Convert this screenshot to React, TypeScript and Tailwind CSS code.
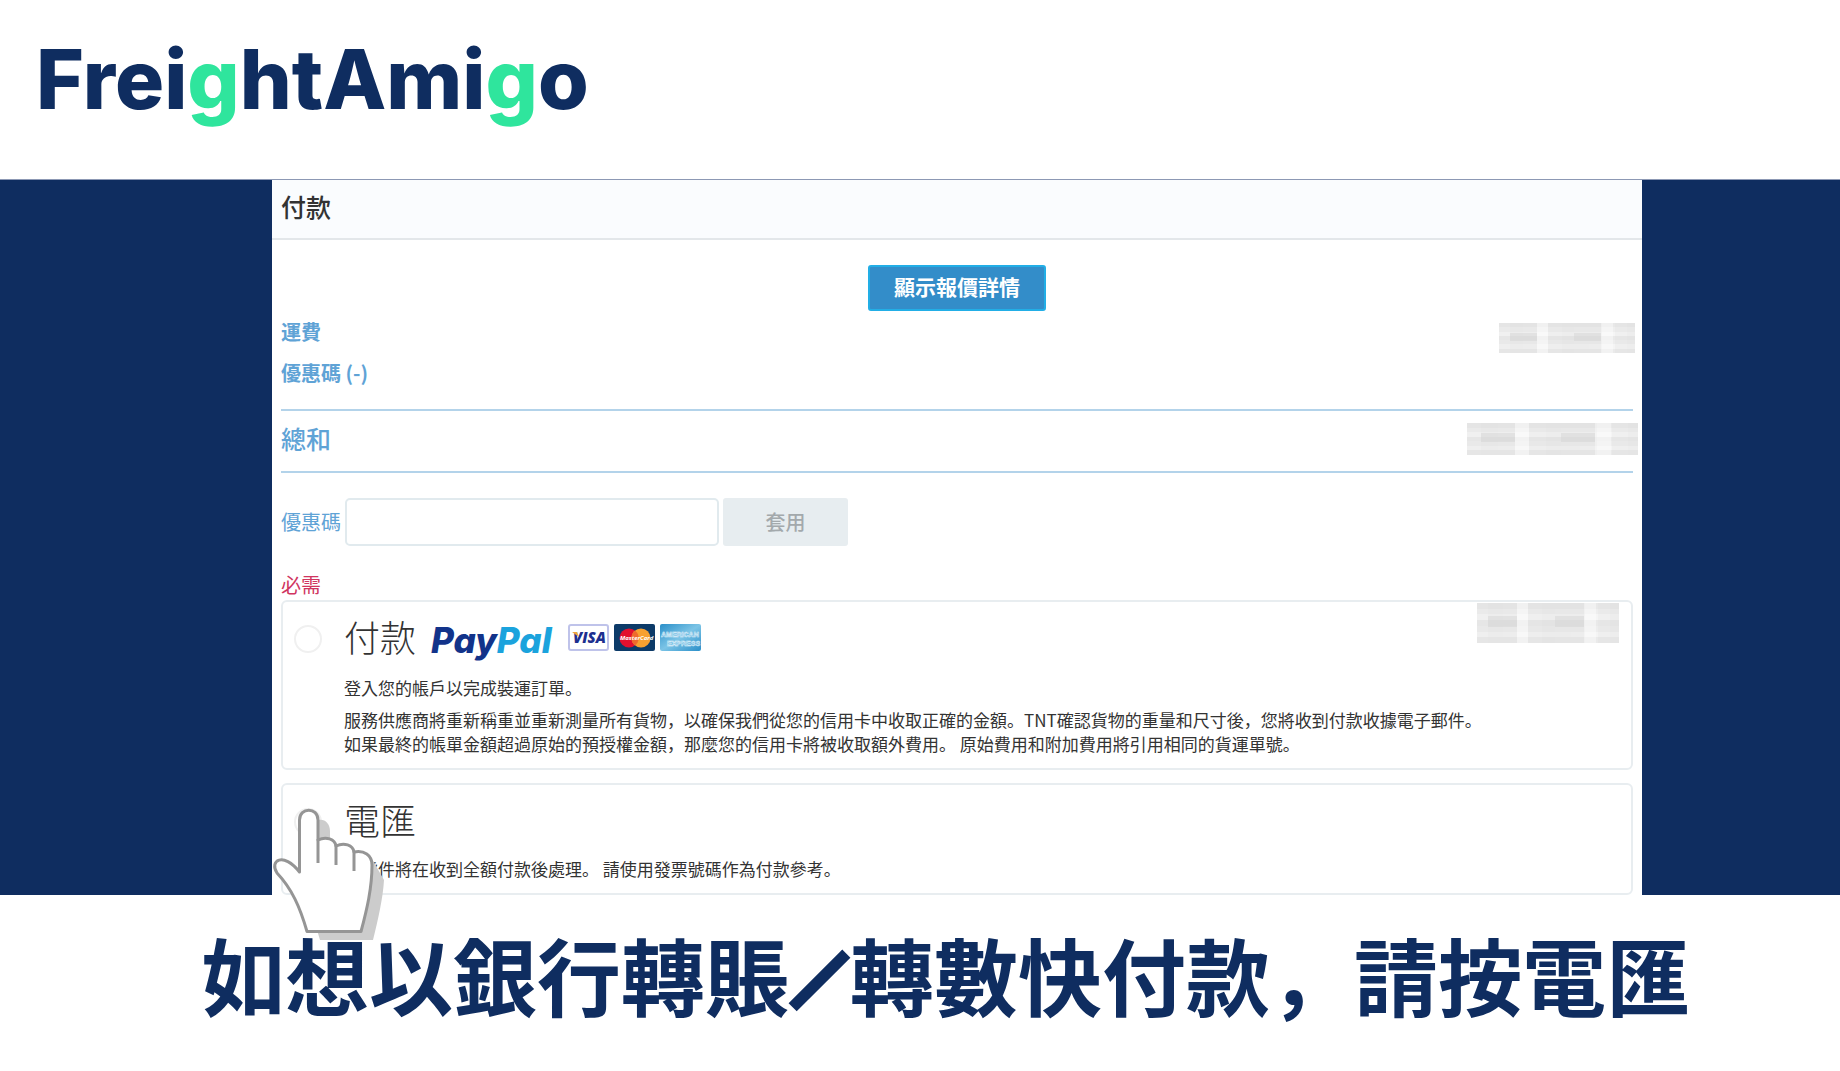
const Logo = () => (
  <a
    href="#"
    className="font-[Inter,sans-serif] text-[82px] leading-[100px] font-extrabold text-[#0f2d60]"
  >
    Frei<span className="text-[#2fe59d]">g</span>htAmi
    <span className="text-[#2fe59d]">g</span>o
  </a>
);

const mosaicCols = [
  { w: 8, o: 0.35 },
  { w: 10, o: 0.6 },
  { w: 10, o: 0.45 },
  { w: 8, o: 0.05 },
  { w: 10, o: 0.4 },
  { w: 9, o: 0.55 },
  { w: 11, o: 0.6 },
  { w: 10, o: 0.5 },
  { w: 9, o: 0.05 },
  { w: 9, o: 0.35 },
  { w: 6, o: 0.5 },
];

const mosaicRows = [0.6, 0.35, 0.05, 0.55, 0.4, 0.1, 0.5];

// Hides a price behind grey blocks
const Mosaic = ({ className }: { className: string }) => {
  let x = 0;
  return (
    <svg
      className={className}
      viewBox="0 0 100 28"
      preserveAspectRatio="none"
      shapeRendering="crispEdges"
      aria-hidden="true"
    >
      <rect width="100" height="28" fill="#f8f8f8" />
      {mosaicRows.map((o, i) => (
        <rect key={i} y={i * 4} width="100" height="4" fill="#d4d4d4" opacity={o * 0.7} />
      ))}
      {mosaicCols.map((c, i) => {
        const left = x;
        x += c.w;
        return (
          <rect key={i} x={left} width={c.w} height="28" fill="#cfcfcf" opacity={c.o * 0.4} />
        );
      })}
      <rect x="8" y="9" width="20" height="8" fill="#cfcfcf" opacity="0.4" />
      <rect x="55" y="9" width="20" height="8" fill="#cfcfcf" opacity="0.4" />
      <rect x="28" width="8" height="28" fill="#ffffff" opacity="0.4" />
      <rect x="75" width="9" height="28" fill="#ffffff" opacity="0.4" />
    </svg>
  );
};

const CardBrands = () => (
  <div className="flex gap-[5px]">
    <svg width="41" height="27" viewBox="0 0 41 27" role="img" aria-label="Visa">
      <rect x="1" y="1" width="39" height="25" rx="2" fill="#fff" stroke="#bfc3ea" strokeWidth="2" />
      <text x="5" y="19" fontFamily="Open Sans" fontSize="15" fontWeight="800" fontStyle="italic" fill="#1d2f8f">
        VISA
      </text>
      <path d="M4 8h5l2 5z" fill="#f0a63c" />
    </svg>
    <svg width="41" height="27" viewBox="0 0 41 27" role="img" aria-label="MasterCard">
      <rect width="41" height="27" rx="2" fill="#0c3a68" />
      <circle cx="15" cy="14" r="9.5" fill="#e2102e" />
      <circle cx="27" cy="14" r="9.5" fill="#f7a030" />
      <path d="M21 6.5a9.5 9.5 0 0 1 0 15a9.5 9.5 0 0 1 0-15z" fill="#ef6a2c" />
      <text x="6" y="16" fontFamily="Open Sans" fontSize="6" fontWeight="700" fontStyle="italic" fill="#fff">
        MasterCard
      </text>
    </svg>
    <svg width="41" height="27" viewBox="0 0 41 27" role="img" aria-label="American Express">
      <defs>
        <linearGradient id="amex" x1="0" y1="0" x2="1" y2="1">
          <stop offset="0" stopColor="#2a8fc9" />
          <stop offset="0.5" stopColor="#7cc4e6" />
          <stop offset="1" stopColor="#2a8fc9" />
        </linearGradient>
      </defs>
      <rect width="41" height="27" rx="2" fill="url(#amex)" />
      <g fontFamily="Liberation Sans" fontSize="7" fontWeight="700" fill="#57addb" stroke="#e4f4fc" strokeWidth="0.5">
        <text x="1" y="13">AMERICAN</text>
        <text x="7" y="22">EXPRESS</text>
      </g>
    </svg>
  </div>
);

const HandPointer = () => (
  <svg
    className="absolute top-[10px] -left-[18px]"
    width="122"
    height="148"
    viewBox="0 0 122 148"
    aria-hidden="true"
  >
    <path
      d="M54 25c6-1 11 4 11 11v12l42 16 12 21c-1 18-6 40-11 60H55l-3-10z"
      fill="#cccccc"
    />
    <path
      d="M34.5 77V25c0-13 18.5-13 18.5 0v20c8-4 17-1 18 6c8-4 17-1 18 6c10-2 18 3 18 13c0 23-5 44-11 66.500H42C35 112 27 94 12 78C4 66 18 56 34.5 77z"
      fill="#fff"
      stroke="#959595"
      strokeWidth="3"
      strokeLinejoin="round"
    />
    <path
      d="M53 44v24M71 50v20M89 56v20"
      fill="none"
      stroke="#959595"
      strokeWidth="3"
    />
  </svg>
);

const Radio = ({ id }: { id: string }) => (
  <input
    type="radio"
    name="payment"
    id={id}
    className="size-[28px] shrink-0 appearance-none rounded-full border-2 border-[#f0f0f0] bg-white"
  />
);

const App = () => {
  return (
    <div className="bg-white font-['Noto_Sans_CJK_JP',sans-serif] text-[#333333]">
      <header className="flex border-b border-[#8c98b4] px-[36px] pt-[30px] pb-[49px]">
        <Logo />
      </header>

      <main className="bg-[#0f2d60] pr-[198px] pl-[272px]">
        <div className="bg-white">
          <h1 className="border-b-2 border-[#e3e7ea] bg-[#fafcfe] px-[9px] pt-[10px] pb-4 text-[25px] leading-[32px] font-medium">
            付款
          </h1>

          <div className="px-[9px] pt-[25px]">
            <div className="flex justify-center">
              <button className="rounded-[3px] border-2 border-[#22aee6] bg-[#338dc9] px-6 pt-[5px] pb-[9px] text-[21px] leading-7 font-bold text-white">
                顯示報價詳情
              </button>
            </div>

            <div className="border-b-2 border-[#b3d3ea] pt-[6px] pb-[21px] text-[20px] leading-[30px] font-bold text-[#5fa3d6]">
              <div className="flex items-start justify-between">
                <span>運費</span>
                <Mosaic className="mt-[6px] -mr-[2px] h-[30px] w-[136px]" />
              </div>
              <div className="pt-[5px]">優惠碼 (-)</div>
            </div>

            <div className="flex h-[62px] items-center justify-between border-b-2 border-[#b3d3ea] pb-1 text-[25px] font-medium text-[#5fa3d6]">
              <span>總和</span>
              <Mosaic className="-mr-[5px] h-[32px] w-[171px]" />
            </div>

            <div className="flex items-center gap-1 pt-[25px] text-[20px]">
              <label htmlFor="coupon" className="text-[#5fa3d6]">
                優惠碼
              </label>
              <input
                id="coupon"
                type="text"
                className="h-12 w-[374px] rounded-[5px] border-2 border-[#e1eaee] px-3"
              />
              <button className="h-12 w-[125px] rounded-[3px] bg-[#e7edf0] font-medium text-[#a3a9ac]">
                套用
              </button>
            </div>

            <p className="pt-[24px] text-[20px] leading-[30px] text-[#d03560]">必需</p>

            <section className="flex items-start gap-[22px] rounded-[6px] border-2 border-[#e8edf0] pt-[10px] pr-3 pb-3 pl-[11px]">
              <div className="pt-[13px]">
                <Radio id="paypal" />
              </div>
              <div className="min-w-0 flex-1">
                <div className="flex items-start">
                  <label
                    htmlFor="paypal"
                    className="flex items-start text-[36px] leading-[48px] font-light"
                  >
                    付款
                    <span className="ml-[15px] pt-1 font-[Inter,sans-serif] text-[35px] font-extrabold text-[#12338a] italic">
                      Pay<span className="text-[#1ba3dd]">Pal</span>
                    </span>
                  </label>
                  <div className="pt-3 pl-4">
                    <CardBrands />
                  </div>
                  <Mosaic className="-mt-[9px] ml-auto h-[40px] w-[142px]" />
                </div>
                <div className="text-[17px] leading-6">
                  <p className="pt-3">登入您的帳戶以完成裝運訂單。</p>
                  <p className="pt-2">
                    服務供應商將重新稱重並重新測量所有貨物，以確保我們從您的信用卡中收取正確的金額。TNT確認貨物的重量和尺寸後，您將收到付款收據電子郵件。
                  </p>
                  <p>
                    如果最終的帳單金額超過原始的預授權金額，那麼您的信用卡將被收取額外費用。 原始費用和附加費用將引用相同的貨運單號。
                  </p>
                </div>
              </div>
            </section>

            <section className="relative mt-[13px] flex items-start gap-[22px] rounded-[6px] border-2 border-[#e8edf0] pt-[10px] pr-3 pb-3 pl-[11px]">
              <div className="pt-[13px]">
                <Radio id="transfer" />
              </div>
              <div>
                <label htmlFor="transfer" className="text-[36px] leading-[48px] font-light">
                  電匯
                </label>
                <p className="pt-[14px] text-[17px] leading-6">
                  此貨件將在收到全額付款後處理。 請使用發票號碼作為付款參考。
                </p>
              </div>
              <HandPointer />
            </section>
          </div>
        </div>
      </main>

      <footer className="pt-[19px] pr-[150px] pl-[201px] text-[84px] leading-[120px] font-bold whitespace-nowrap text-[#0f2d60]">
        如想以銀行轉賬
        <span className="inline-block w-[61px] text-center align-[10px] text-[52px] leading-none [-webkit-text-stroke:9px_#0f2d60]">
          ／
        </span>
        轉數快付款，請按電匯
      </footer>
    </div>
  );
};

export default App;
